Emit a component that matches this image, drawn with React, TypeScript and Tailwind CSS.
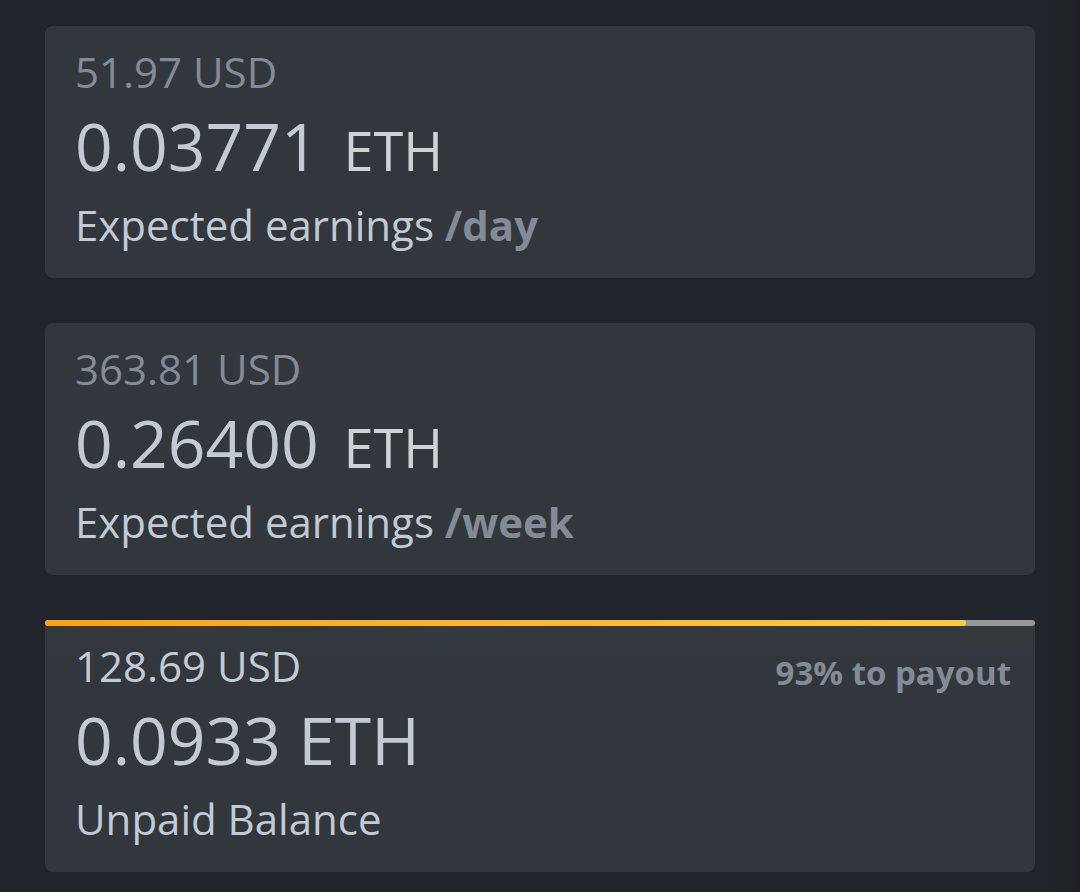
import clsx from 'clsx';

interface EarningsCardProps {
  usd: string;
  amount: string;
  period: string;
}

interface ProgressBarProps {
  percent: number;
}

function EarningsCard({ usd, amount, period }: EarningsCardProps) {
  return (
    <section className="h-[252px] rounded-lg bg-[#32373e] px-[30px] pt-4 text-[#c3cad4]">
      <p className="h-[58px] text-[42px] leading-[60px] text-[#858b96]">{usd} USD</p>
      <p className="flex h-[92px] items-baseline text-[66px] leading-[90px]">
        <span className="w-[268.5px]">{amount}</span>
        <span className="text-[54px] text-[#cdd2d3]">ETH</span>
      </p>
      <p className="h-[66px] text-[42px] leading-[66px]">
        Expected earnings <span className="font-bold text-[#858b96]">/{period}</span>
      </p>
    </section>
  );
}

function ProgressBar({ percent }: ProgressBarProps) {
  return (
    <div className="h-1.5 overflow-hidden rounded-full bg-[#969597]">
      <div
        className="h-full rounded-full bg-linear-to-r from-[#fba30c] to-[#fdc940]"
        style={{ width: `${percent}%` }}
      />
    </div>
  );
}

export default function App() {
  return (
    <main
      className={clsx(
        'flex h-[892px] flex-col gap-[45px] overflow-hidden px-[45px] pt-[26px]',
        'bg-[#21242b] bg-linear-to-r from-[#21242b] from-[96%] to-[#1e2124]',
        "font-['Open_Sans','Noto_Sans',sans-serif]"
      )}
    >
      <EarningsCard usd="51.97" amount="0.03771" period="day" />
      <EarningsCard usd="363.81" amount="0.26400" period="week" />

      <section className="h-[252px] rounded-t-[3px] rounded-b-lg bg-[#32373e] bg-linear-to-b from-[#34393c] to-[#32373e] to-[40px] text-[#c3cad4]">
        <ProgressBar percent={93} />
        <div className="px-[30px] pt-2.5">
          <div className="flex h-[58px] justify-between">
            <p className="text-[42px] leading-[60px]">128.69 USD</p>
            <p className="-mr-1.5 pt-[7px] text-[33px] leading-[60px] font-bold text-[#858b96]">
              93% to payout
            </p>
          </div>
          <p className="h-[92px] text-[66px] leading-[90px]">0.0933 ETH</p>
          <p className="h-[66px] text-[42px] leading-[66px]">Unpaid Balance</p>
        </div>
      </section>
    </main>
  );
}
